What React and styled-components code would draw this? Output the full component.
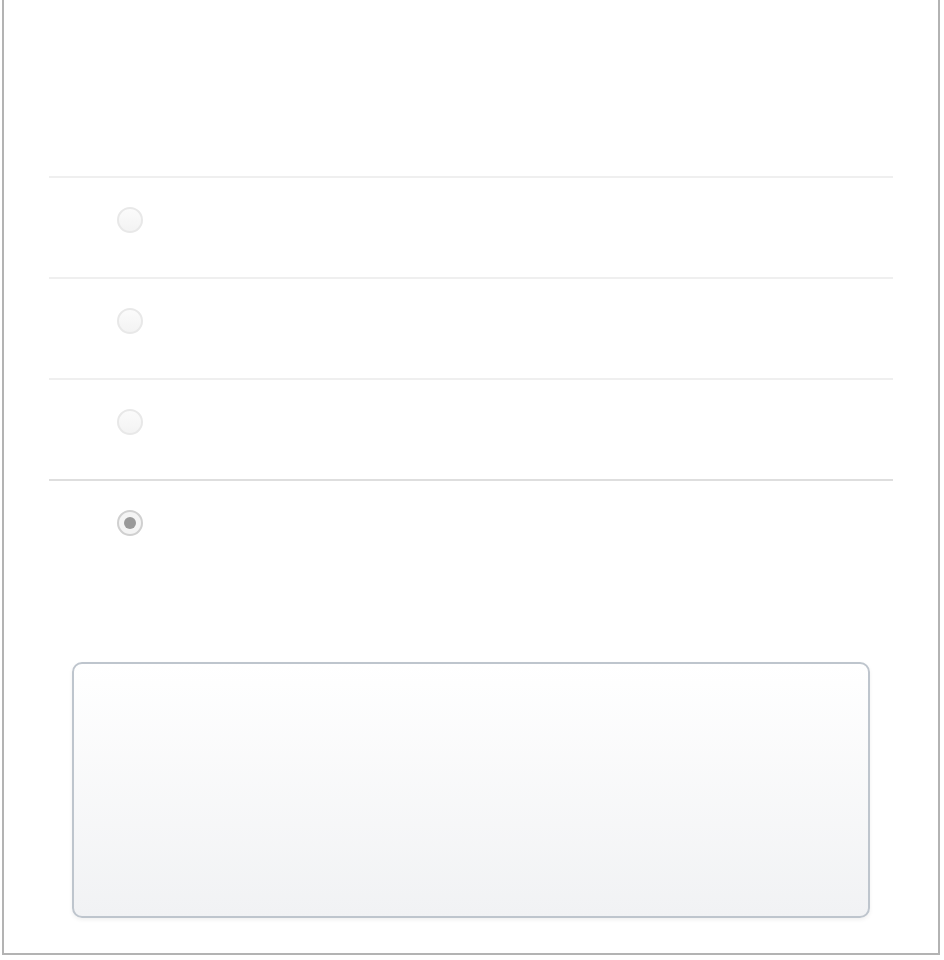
import React, { useState } from 'react';
import styled, { createGlobalStyle } from 'styled-components';

const GlobalStyle = createGlobalStyle`
  body {
    margin: 0;
    background: #ffffff;
    font-family: 'Liberation Sans', Arial, sans-serif;
  }
`;

const Frame = styled.div`
  box-sizing: border-box;
  margin-left: 2px;
  width: 938px;
  height: 955px;
  border: 2px solid #b3b3b3;
  border-top: none;
  padding: 176px 45px 0 45px;
  display: flex;
  flex-direction: column;
`;

const List = styled.div`
  display: flex;
  flex-direction: column;
`;

const Row = styled.label`
  box-sizing: border-box;
  display: flex;
  align-items: flex-start;
  height: 101px;
  padding: 29px 0 0 68px;
  border-top: 2px solid ${(props) => (props.strong ? '#dedede' : '#efefef')};
  cursor: pointer;
`;

const LastRow = styled(Row)`
  height: 61px;
`;

const Radio = styled.span`
  box-sizing: border-box;
  display: flex;
  align-items: center;
  justify-content: center;
  width: 26px;
  height: 26px;
  border-radius: 50%;
  border: 2px solid ${(props) => (props.checked ? '#d0d0d0' : '#e8e8e8')};
  background: ${(props) =>
    props.checked ? '#f4f4f4' : 'linear-gradient(#fbfbfb, #f3f3f3)'};

  &::after {
    content: '';
    width: 12px;
    height: 12px;
    border-radius: 50%;
    background: #999999;
    display: ${(props) => (props.checked ? 'block' : 'none')};
  }
`;

const Panel = styled.div`
  box-sizing: border-box;
  margin: 122px 23px 0 23px;
  height: 256px;
  border: 2px solid #bec5cd;
  border-radius: 10px;
  background: linear-gradient(#ffffff, #f1f2f4);
  box-shadow: 0 2px 4px rgba(0, 0, 0, 0.06);
`;

const options = ['a', 'b', 'c', 'd'];

export default function App() {
  const [selected, setSelected] = useState('d');

  return (
    <>
      <GlobalStyle />
      <Frame>
        <List>
          {options.slice(0, 3).map((opt) => (
            <Row key={opt} onClick={() => setSelected(opt)}>
              <Radio checked={selected === opt} />
            </Row>
          ))}
          <LastRow strong onClick={() => setSelected('d')}>
            <Radio checked={selected === 'd'} />
          </LastRow>
        </List>
        <Panel />
      </Frame>
    </>
  );
}
